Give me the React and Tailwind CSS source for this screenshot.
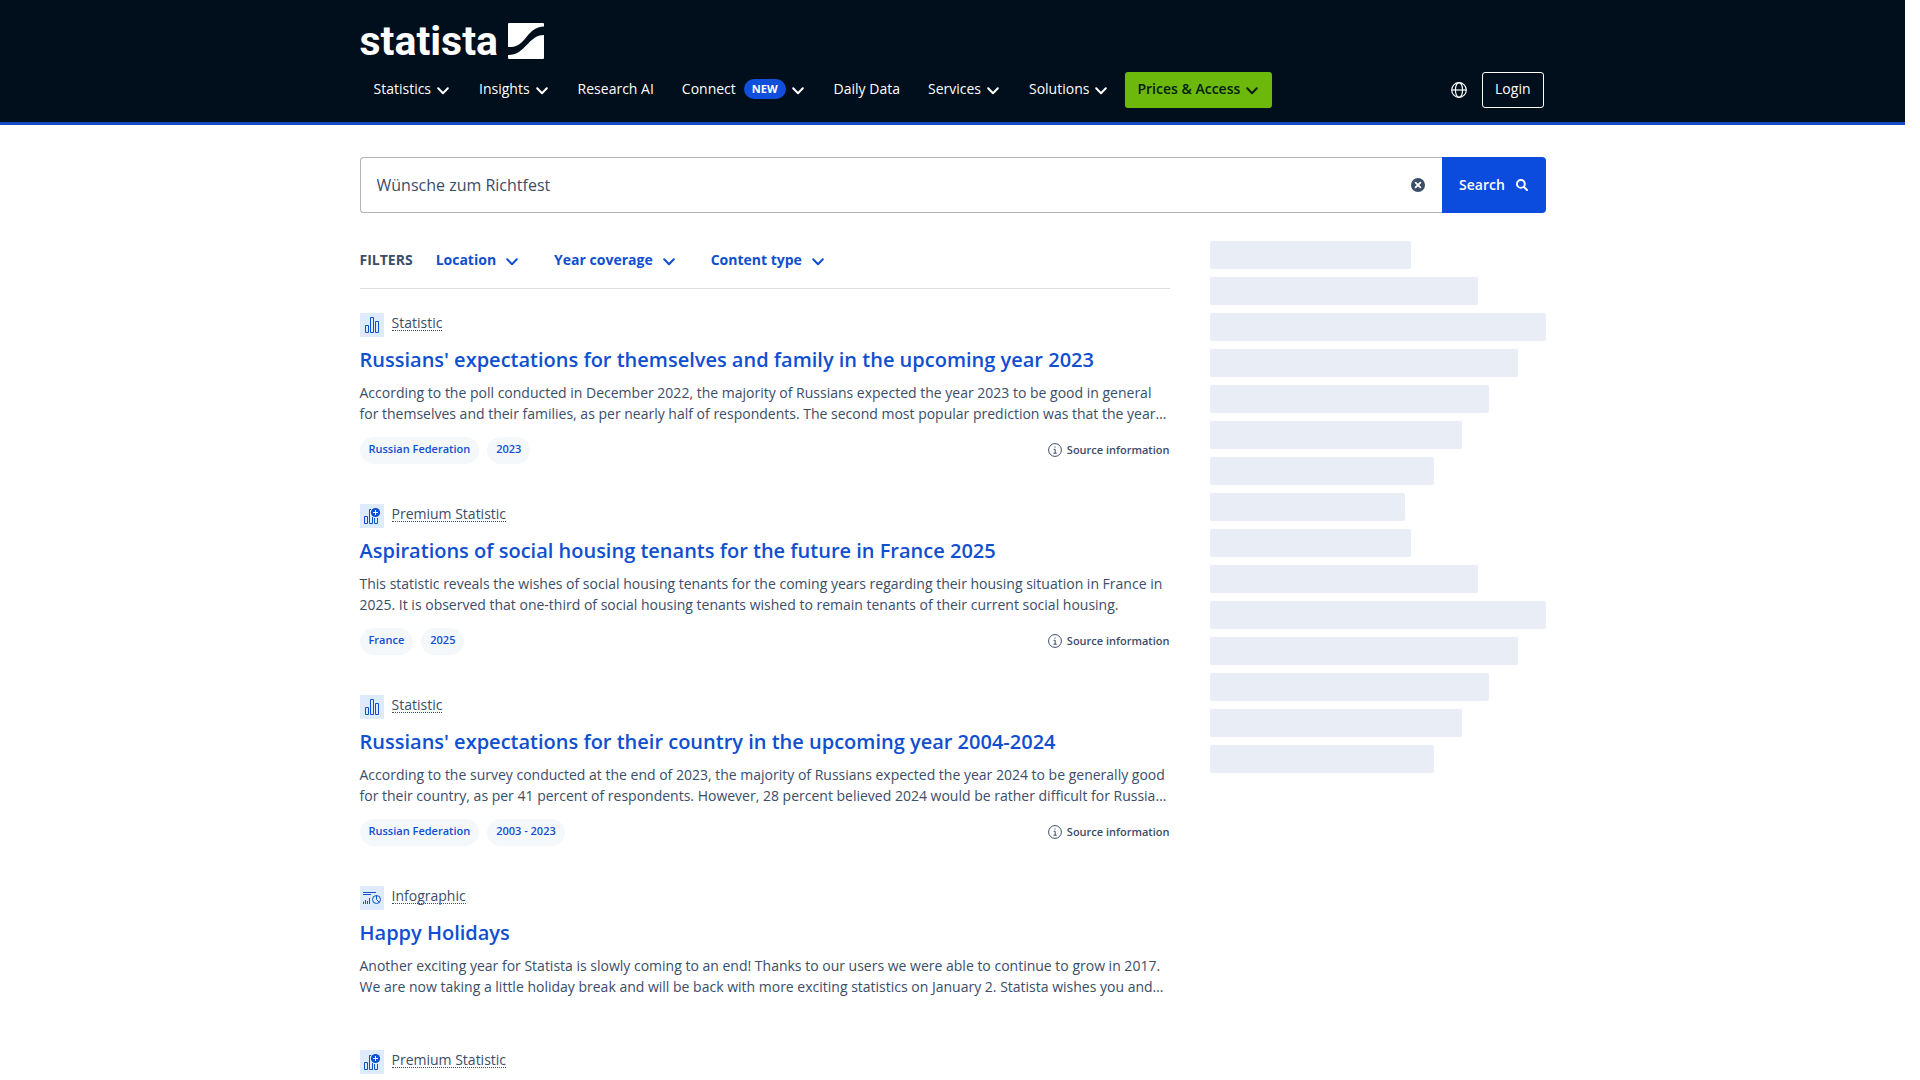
import { useState } from 'react';

const navItems = [
    { label: 'Statistics', menu: true },
    { label: 'Insights', menu: true },
    { label: 'Research AI' },
    { label: 'Connect', badge: 'NEW', menu: true },
    { label: 'Daily Data' },
    { label: 'Services', menu: true },
    { label: 'Solutions', menu: true },
];

const filters = ['Location', 'Year coverage', 'Content type'];

const results = [
    {
        kind: 'Statistic',
        title: "Russians' expectations for themselves and family in the upcoming year 2023",
        text: [
            'According to the poll conducted in December 2022, the majority of Russians expected the year 2023 to be good in general',
            'for themselves and their families, as per nearly half of respondents. The second most popular prediction was that the year…',
        ],
        tags: ['Russian Federation', '2023'],
    },
    {
        kind: 'Premium Statistic',
        title: 'Aspirations of social housing tenants for the future in France 2025',
        text: [
            'This statistic reveals the wishes of social housing tenants for the coming years regarding their housing situation in France in',
            '2025. It is observed that one-third of social housing tenants wished to remain tenants of their current social housing.',
        ],
        tags: ['France', '2025'],
    },
    {
        kind: 'Statistic',
        title: "Russians' expectations for their country in the upcoming year 2004-2024",
        text: [
            'According to the survey conducted at the end of 2023, the majority of Russians expected the year 2024 to be generally good',
            'for their country, as per 41 percent of respondents. However, 28 percent believed 2024 would be rather difficult for Russia…',
        ],
        tags: ['Russian Federation', '2003 - 2023'],
    },
    {
        kind: 'Infographic',
        title: 'Happy Holidays',
        text: [
            'Another exciting year for Statista is slowly coming to an end! Thanks to our users we were able to continue to grow in 2017.',
            'We are now taking a little holiday break and will be back with more exciting statistics on January 2. Statista wishes you and…',
        ],
    },
    { kind: 'Premium Statistic' },
];

const skeletonWidths = [
    'w-[201px]', 'w-[268px]', 'w-[336px]', 'w-[308px]', 'w-[279px]',
    'w-[252px]', 'w-[224px]', 'w-[195px]', 'w-[201px]', 'w-[268px]',
    'w-[336px]', 'w-[308px]', 'w-[279px]', 'w-[252px]', 'w-[224px]',
];

function Chevron() {
    return (
        <svg className="w-3 h-2 mt-1 mr-[2px] shrink-0" viewBox="0 0 12 8" fill="none" stroke="currentColor" strokeWidth="2" strokeLinecap="round" strokeLinejoin="round">
            <path d="M1.2 1.3 6 6.2l4.8-4.9" />
        </svg>
    );
}

function Logo() {
    return (
        <a href="#" className="flex w-fit h-9 items-center gap-[11px] text-white">
            <span className="w-[137px] font-['Roboto',sans-serif] font-bold text-[41px] leading-9">statista</span>
            <svg className="w-9 h-9" viewBox="0 0 36 36" fill="currentColor">
                <path d="M1 0h34a1 1 0 0 1 1 1v2.500C19 3.500 18 24 3 24H0V1a1 1 0 0 1 1-1Z" />
                <path d="M36 12v23a1 1 0 0 1-1 1H1a1 1 0 0 1-1-1v-3C18 32 20 12 36 12Z" />
            </svg>
        </a>
    );
}

function KindIcon({ kind }) {
    return (
        <svg className="w-6 h-6 bg-[#deebfc] text-[#0f4fd0]" viewBox="0 0 24 24" fill="none" stroke="currentColor">
            {kind === 'Statistic' && (
                <path d="M5.500 12.500h3v7h-3zM10.500 4.500h3v15h-3zM15.500 8.500h3v11h-3z" />
            )}
            {kind === 'Premium Statistic' && (
                <>
                    <path d="M4.500 12.500h3v7h-3zM11 5.500H9.500v14h3V13M14.500 14v5.500h3V14" />
                    <circle cx="15.500" cy="8.500" r="4.600" fill="currentColor" stroke="none" />
                    <path d="M15.500 6v5M13 8.500h5" stroke="white" />
                </>
            )}
            {kind === 'Infographic' && (
                <>
                    <path d="M3 6.500h13M3 8.500h8M3.500 18v-2.500M5.500 18v-4M7.500 18v-3M9.500 18v-6" />
                    <circle cx="16.500" cy="13.500" r="4" />
                    <path d="M16.500 9.500v4l2.800 2.800" />
                </>
            )}
        </svg>
    );
}

function Result({ kind, title, text, tags }) {
    return (
        <article className="flow-root mb-10 last:mb-0">
            <div className="flex h-6 gap-2">
                <KindIcon kind={kind} />
                <span className="h-[18px] leading-5 border-b border-dotted border-[#3a4d69]">{kind}</span>
            </div>
            {title && (
                <>
                    <h2 className="mt-[9px] text-xl leading-7 font-semibold text-[#0f4fd0]">
                        <a href="#">{title}</a>
                    </h2>
                    <p className="mt-2 mb-[13px] leading-[21px]">
                        {text[0]}<br />{text[1]}
                    </p>
                </>
            )}
            {tags && (
                <div className="flex h-[27px] items-center justify-between text-[11px] leading-4 font-semibold">
                    <div className="flex gap-2">
                        {tags.map(tag => (
                            <span key={tag} className="px-[9px] pt-1 pb-[7px] rounded-full bg-[#f5f8fb] text-[#0f4fd0]">{tag}</span>
                        ))}
                    </div>
                    <button className="flex items-center gap-[5px] pb-[2px] cursor-pointer">
                        <svg className="w-[14px] h-[14px]" viewBox="0 0 14 14" fill="none" stroke="currentColor">
                            <circle cx="7" cy="7" r="6.400" />
                            <path d="M5.600 6.300h1.600v3.900M5.400 10.200h3.400M6.400 4h1.200" />
                        </svg>
                        Source information
                    </button>
                </div>
            )}
        </article>
    );
}

export default function App() {
    const [query, setQuery] = useState('Wünsche zum Richtfest');

    return (
        <div className="min-h-screen pr-[15px] bg-white font-['Open_Sans',sans-serif] text-sm text-[#3a4d69]">
            <header className="bg-[#010e1b] border-b-[3px] border-[#164bc4] pt-[23px] pb-[14px]">
                <div className="max-w-[1186px] mx-auto">
                    <Logo />
                    <nav className="mt-[13px] flex items-center text-white">
                        {navItems.map(item => (
                            <a key={item.label} href="#" className="flex h-9 items-center gap-[6px] px-[14px] pb-[2px]">
                                {item.label}
                                {item.badge && (
                                    <span className="ml-[2px] px-2 rounded-full bg-[#0f4fdc] text-[11px] leading-5 font-bold">{item.badge}</span>
                                )}
                                {item.menu && <Chevron />}
                            </a>
                        ))}
                        <button className="ml-[2px] flex h-9 items-center gap-[6px] px-3 pb-[2px] rounded-[3px] bg-[#6cb90b] text-[#01200f] font-semibold cursor-pointer">
                            Prices &amp; Access
                            <Chevron />
                        </button>
                        <button aria-label="Language" className="ml-auto mr-[15px] cursor-pointer">
                            <svg className="w-4 h-4" viewBox="0 0 16 16" fill="none" stroke="currentColor" strokeWidth="1.200">
                                <circle cx="8" cy="8" r="7.300" />
                                <ellipse cx="8" cy="8" rx="3.600" ry="7.300" />
                                <path d="M.7 8h14.600" />
                            </svg>
                        </button>
                        <button className="mr-[2px] h-9 px-3 pb-[2px] border border-white rounded-[3px] cursor-pointer">Login</button>
                    </nav>
                </div>
            </header>

            <main className="max-w-[1186px] mx-auto">
                <form className="mt-8 flex h-14" onSubmit={e => e.preventDefault()}>
                    <div className="flex flex-1 items-center border border-r-0 border-[#b0b3b8] rounded-l pl-4 pr-[17px]">
                        <input
                            type="text"
                            aria-label="Search term"
                            value={query}
                            onChange={e => setQuery(e.target.value)}
                            className="flex-1 text-base outline-none"
                        />
                        <button type="button" aria-label="Clear" onClick={() => setQuery('')} className="cursor-pointer">
                            <svg className="w-[14px] h-[14px]" viewBox="0 0 14 14">
                                <circle cx="7" cy="7" r="7" fill="#3a4d69" />
                                <path d="m4.600 4.600 4.800 4.800m0-4.800L4.600 9.400" stroke="white" strokeWidth="1.800" strokeLinecap="round" />
                            </svg>
                        </button>
                    </div>
                    <button type="submit" className="flex w-[104px] items-center justify-center gap-[11px] rounded-r bg-[#0b4bdd] text-white font-semibold cursor-pointer">
                        Search
                        <svg className="w-3 h-3" viewBox="0 0 12 12" fill="none" stroke="currentColor" strokeWidth="2" strokeLinecap="round">
                            <circle cx="4.900" cy="4.900" r="3.900" />
                            <path d="m8 8 3 3" />
                        </svg>
                    </button>
                </form>

                <div className="flex gap-10">
                    <section className="flex-1 min-w-0">
                        <div className="mt-7 mb-6 flex h-12 pt-[7px] border-b border-[#dcdee2] font-bold">
                            <span className="mr-[23px] leading-6">FILTERS</span>
                            <div className="flex gap-[34px]">
                                {filters.map(label => (
                                    <button key={label} className="flex h-6 items-center gap-[10px] text-[#0f4fd0] cursor-pointer">
                                        {label}
                                        <Chevron />
                                    </button>
                                ))}
                            </div>
                        </div>
                        {results.map((result, i) => <Result key={i} {...result} />)}
                    </section>

                    <aside className="mt-7 w-[336px] space-y-2">
                        {skeletonWidths.map((width, i) => (
                            <div key={i} className={`h-7 rounded-[2px] bg-[#e9eef6] ${width}`} />
                        ))}
                    </aside>
                </div>
            </main>
        </div>
    );
}
